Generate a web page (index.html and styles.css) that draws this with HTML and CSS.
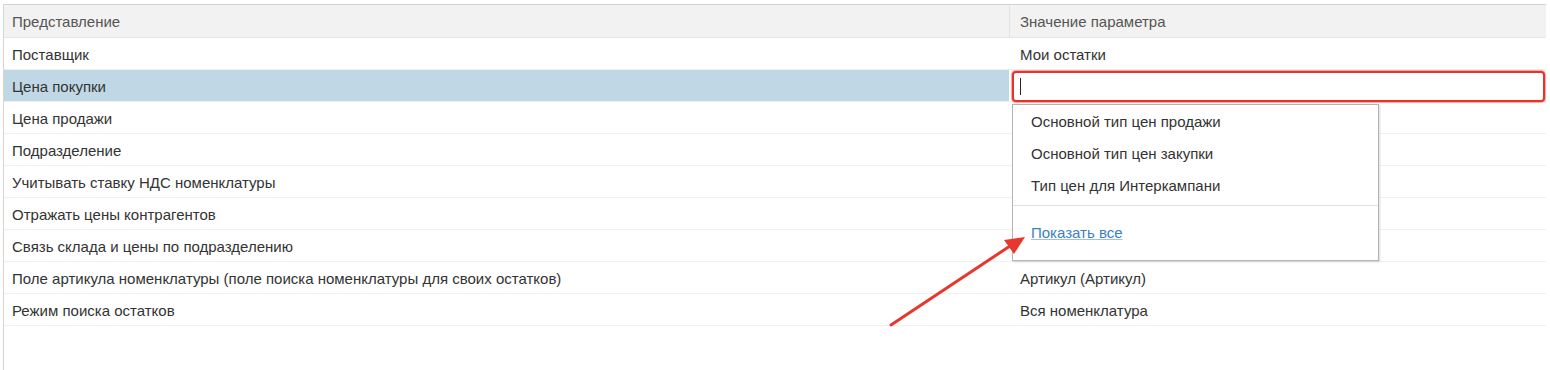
FILE: index.html
```html
<!DOCTYPE html>
<html>
<head>
    <title>Настройки</title>
    <link rel="stylesheet" href="styles.css">
</head>
<body>
    <div class="grid">
        <div class="row head">
            <div class="cell name">Представление</div>
            <div class="cell value">Значение параметра</div>
        </div>
        <div class="row">
            <div class="cell name">Поставщик</div>
            <div class="cell value">Мои остатки</div>
        </div>
        <div class="row selected">
            <div class="cell name">Цена покупки</div>
            <div class="cell value editing">
                <div class="input"><span class="caret"></span></div>
                <div class="dropdown">
                    <div class="item">Основной тип цен продажи</div>
                    <div class="item">Основной тип цен закупки</div>
                    <div class="item">Тип цен для Интеркампани</div>
                    <div class="divider"></div>
                    <div class="more"><a href="#">Показать все</a></div>
                </div>
            </div>
        </div>
        <div class="row">
            <div class="cell name">Цена продажи</div>
            <div class="cell value"></div>
        </div>
        <div class="row">
            <div class="cell name">Подразделение</div>
            <div class="cell value"></div>
        </div>
        <div class="row">
            <div class="cell name">Учитывать ставку НДС номенклатуры</div>
            <div class="cell value"></div>
        </div>
        <div class="row">
            <div class="cell name">Отражать цены контрагентов</div>
            <div class="cell value"></div>
        </div>
        <div class="row">
            <div class="cell name">Связь склада и цены по подразделению</div>
            <div class="cell value"></div>
        </div>
        <div class="row">
            <div class="cell name">Поле артикула номенклатуры (поле поиска номенклатуры для своих остатков)</div>
            <div class="cell value">Артикул (Артикул)</div>
        </div>
        <div class="row">
            <div class="cell name">Режим поиска остатков</div>
            <div class="cell value">Вся номенклатура</div>
        </div>
    </div>

    <svg class="arrow" width="1550" height="370" viewBox="0 0 1550 370">
        <line x1="891" y1="325" x2="1010" y2="246" stroke="#e8372c" stroke-width="3" stroke-linecap="round"/>
        <polygon points="1025,237 1004,240 1014,254" fill="#e8372c"/>
    </svg>
</body>
</html>
```

FILE: styles.css
```css
body {
    margin: 0;
    padding: 4px 0 0 3px;
    font-family: "Liberation Sans", Arial, sans-serif;
    font-size: 15px;
    color: #333;
    background-color: white;
    height: 366px;
    overflow: hidden;
}
.grid {
    width: 1543px;
    height: 366px;
    border-top: 1px solid #d4d4d4;
    border-left: 1px solid #d4d4d4;
    box-sizing: border-box;
}
.row {
    display: flex;
    height: 32px;
    border-bottom: 1px solid #f0f0f0;
    box-sizing: border-box;
    padding-top: 1px;
}
.row.head {
    height: 33px;
    padding-top: 0;
    background-color: #f2f2f2;
    color: #555;
    border-bottom: 1px solid #e6e6e6;
}
.cell {
    display: flex;
    align-items: center;
    white-space: nowrap;
}
.name {
    width: 1005px;
    padding-left: 8px;
    box-sizing: border-box;
}
.value {
    flex: 1;
    padding-left: 11px;
}
.head .value {
    border-left: 1px solid #e2e2e2;
    padding-left: 10px;
}
.selected {
    padding-top: 0;
}
.selected .name {
    background-color: #c0d8e6;
    padding-top: 1px;
}
.editing {
    position: relative;
    padding-left: 3px;
    padding-right: 1px;
    align-items: stretch;
}
.input {
    flex: 1;
    margin-top: 1px;
    margin-bottom: -1px;
    border: 2px solid #e4342b;
    border-radius: 4px;
    box-shadow: 0 0 1px 1px rgba(228, 52, 43, 0.45);
    background-color: white;
    display: flex;
    align-items: center;
    padding-left: 6px;
}
.caret {
    width: 1px;
    height: 17px;
    background-color: #222;
}
.dropdown {
    position: absolute;
    left: 3px;
    top: 34px;
    width: 367px;
    height: 157px;
    box-sizing: border-box;
    background-color: white;
    border: 1px solid #b4b4b4;
    box-shadow: 1px 1px 2px rgba(0, 0, 0, 0.15);
    padding-top: 1px;
    z-index: 2;
}
.item {
    height: 32px;
    line-height: 32px;
    padding-left: 18px;
}
.divider {
    margin-top: 3px;
    border-top: 1px solid #e0e0e0;
}
.more {
    padding-left: 18px;
    padding-top: 18px;
}
.more a {
    color: #3a7fc6;
    text-decoration: underline;
    text-decoration-color: #9cc3e6;
}
.arrow {
    position: absolute;
    left: 0;
    top: 0;
    pointer-events: none;
    z-index: 3;
}
```
